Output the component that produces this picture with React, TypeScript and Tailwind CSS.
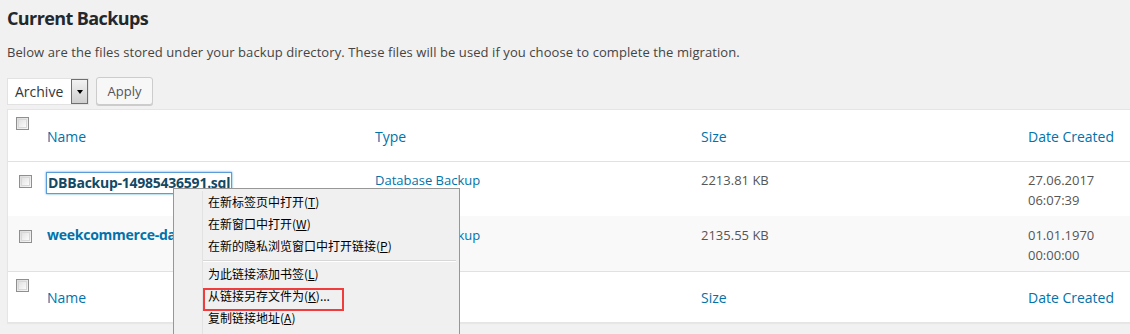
import React from "react";

function Check({ className = "" }: { className?: string }) {
  return (
    <div
      className={
        "w-[13px] h-[13px] border border-[#8f8f8f] bg-gradient-to-br from-[#dcdcdc] to-[#f7f7f7] p-[1px] " +
        className
      }
    >
      <div className="w-full h-full border border-[#d8d8d8] bg-gradient-to-br from-[#e2e2e2] to-[#fbfbfb]" />
    </div>
  );
}

function MenuItem({ pre, acc, post = "" }: { pre: string; acc: string; post?: string }) {
  return (
    <div className="h-[22px] flex items-center pl-[34px] text-[12px] text-black leading-none">
      <span>
        {pre}(<u>{acc}</u>){post}
      </span>
    </div>
  );
}

export default function App() {
  return (
    <div
      className="relative w-[1130px] h-[334px] overflow-hidden bg-[#f1f1f1] text-[#32373c]"
      style={{ fontFamily: '"Open Sans", "Noto Sans", sans-serif' }}
    >
      <h2 className="pl-[7px] pt-[5px] h-[34px] text-[18px] tracking-[-0.6px] font-bold text-[#23282d] leading-[26px]">
        Current Backups
      </h2>
      <p className="pl-[7px] pt-[8px] h-[38px] text-[13px] tracking-[0.08px] leading-[20px] text-[#444]">
        Below are the files stored under your backup directory. These files will be used if you choose to complete the migration.
      </p>
      <div className="flex items-start pl-[7px] pt-[4px] h-[37px] gap-[7px]">
        <div className="mt-[2px] flex h-[27px] w-[82px] bg-white border border-[#e2e2e2]">
          <div className="flex-1 pl-[7px] text-[14px] leading-[25px] text-[#32373c]">Archive</div>
          <div className="w-[17px] h-[25px] border border-[#707070] bg-gradient-to-b from-[#f2f2f2] to-[#cfcfcf] flex items-center justify-center">
            <div className="w-0 h-0 border-l-[3px] border-r-[3px] border-t-[4px] border-l-transparent border-r-transparent border-t-black" />
          </div>
        </div>
        <div className="mt-[1px] h-[28px] w-[57px] rounded-[3px] border border-[#cccccc] bg-[#f7f7f7] shadow-[0_1px_0_#cccccc] text-[13px] text-[#555] leading-[26px] text-center">
          Apply
        </div>
      </div>

      <div className="ml-[7px] w-[1140px] bg-white border border-[#e5e5e5] shadow-[0_1px_1px_rgba(0,0,0,0.04)]">
        {/* header */}
        <div className="grid grid-cols-[29px_328px_326px_327px_1fr] h-[52px] border-b border-[#e1e1e1]">
          <div className="pl-[8px] pt-[7px]">
            <Check />
          </div>
          <div className="pl-[10px] pt-[17px] text-[14px] leading-[20px] text-[#0073aa]">Name</div>
          <div className="pl-[10px] pt-[17px] text-[14px] leading-[20px] text-[#0073aa]">Type</div>
          <div className="pl-[10px] pt-[17px] text-[14px] leading-[20px] text-[#0073aa]">Size</div>
          <div className="pl-[10px] pt-[17px] text-[14px] leading-[20px] text-[#0073aa]">Date Created</div>
        </div>
        {/* row 1 */}
        <div className="grid grid-cols-[29px_328px_326px_327px_1fr] h-[54px] bg-white">
          <div className="pl-[11px] pt-[13px]">
            <Check />
          </div>
          <div className="pl-[10px] pt-[8px]">
            <span className="inline-block px-[1px] text-[14px] tracking-[-0.25px] leading-[20px] font-bold text-[#124964] shadow-[0_0_0_1px_#5b9dd9,0_0_2px_1px_rgba(30,140,190,0.8)]">
              DBBackup-14985436591.sql
            </span>
          </div>
          <div className="pl-[10px] pt-[8px] text-[13px] leading-[20px] text-[#0073aa]">Database Backup</div>
          <div className="pl-[10px] pt-[8px] text-[13px] leading-[20px] text-[#555]">2213.81 KB</div>
          <div className="pl-[10px] pt-[8px] text-[13px] leading-[20px] text-[#555]">
            <div>27.06.2017</div>
            <div>06:07:39</div>
          </div>
        </div>
        {/* row 2 */}
        <div className="grid grid-cols-[29px_328px_326px_327px_1fr] h-[56px] bg-[#f9f9f9] border-b border-[#e1e1e1]">
          <div className="pl-[11px] pt-[14px]">
            <Check />
          </div>
          <div className="pl-[10px] pt-[9px]">
            <div className="w-[126px] overflow-hidden whitespace-nowrap text-[14px] tracking-[-0.25px] leading-[20px] font-bold text-[#0073aa]">
              weekcommerce-da
            </div>
          </div>
          <div className="pl-[10px] pt-[9px] text-[13px] leading-[20px] text-[#0073aa]">Database Backup</div>
          <div className="pl-[10px] pt-[9px] text-[13px] leading-[20px] text-[#555]">2135.55 KB</div>
          <div className="pl-[10px] pt-[9px] text-[13px] leading-[20px] text-[#555]">
            <div>01.01.1970</div>
            <div>00:00:00</div>
          </div>
        </div>
        {/* footer */}
        <div className="grid grid-cols-[29px_328px_326px_327px_1fr] h-[50px]">
          <div className="pl-[8px] pt-[7px]">
            <Check />
          </div>
          <div className="pl-[10px] pt-[16px] text-[14px] leading-[20px] text-[#0073aa]">Name</div>
          <div className="pl-[10px] pt-[16px] text-[14px] leading-[20px] text-[#0073aa]">Type</div>
          <div className="pl-[10px] pt-[16px] text-[14px] leading-[20px] text-[#0073aa]">Size</div>
          <div className="pl-[10px] pt-[16px] text-[14px] leading-[20px] text-[#0073aa]">Date Created</div>
        </div>
      </div>

      {/* context menu */}
      <div
        className="absolute left-[173px] top-[188px] w-[287px] h-[170px] bg-[#f0f0f0] border border-[#979797] pt-[2px]"
        style={{ fontFamily: '"Noto Sans CJK SC", "Open Sans", sans-serif' }}
      >
        <div className="absolute left-[28px] top-[2px] bottom-0 w-px bg-[#e2e2e2]" />
        <MenuItem pre="在新标签页中打开" acc="T" />
        <MenuItem pre="在新窗口中打开" acc="W" />
        <MenuItem pre="在新的隐私浏览窗口中打开链接" acc="P" />
        <div className="h-[6px] pt-[3px] pl-[29px] pr-[3px]">
          <div className="border-t border-[#d7d7d7] border-b border-b-white" />
        </div>
        <MenuItem pre="为此链接添加书签" acc="L" />
        <MenuItem pre="从链接另存文件为" acc="K" post="..." />
        <MenuItem pre="复制链接地址" acc="A" />
        <div className="absolute left-[29px] top-[99px] w-[141px] h-[23px] border-2 border-[#f03c3c]" />
      </div>
    </div>
  );
}
